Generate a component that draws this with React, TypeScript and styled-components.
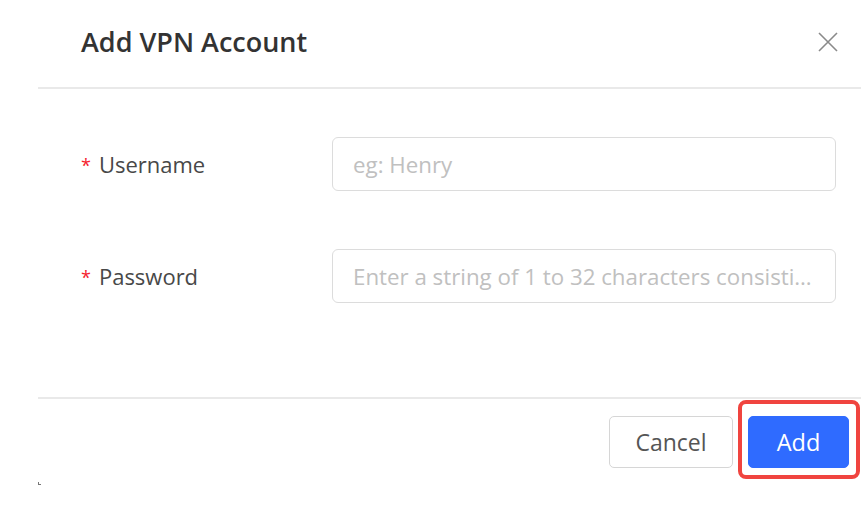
import React from "react";
import styled, { createGlobalStyle } from "styled-components";

const Global = createGlobalStyle`
  html, body { margin: 0; padding: 0; background: #ffffff; }
  body { font-family: "Open Sans", "Noto Sans", sans-serif; }
  * { box-sizing: border-box; }
`;

const Page = styled.div`
  width: 861px;
  height: 509px;
  padding-left: 38px;
  background: #fff;
  position: relative;
  overflow: hidden;
`;

const Dialog = styled.div`
  display: flex;
  flex-direction: column;
  width: 100%;
`;

const Header = styled.div`
  height: 89px;
  display: flex;
  align-items: center;
  justify-content: space-between;
  padding: 0 22px 4px 43px;
  border-bottom: 2px solid #e9e9e9;
`;

const Title = styled.h2`
  margin: 0;
  font-size: 27px;
  font-weight: 600;
  color: #333;
  letter-spacing: 0;
`;

const Close = styled.button`
  border: none;
  background: none;
  padding: 0;
  width: 22px;
  height: 22px;
  display: flex;
  align-items: center;
  justify-content: center;
  cursor: pointer;
`;

const Body = styled.div`
  height: 308px;
  padding: 48px 25px 0 43px;
  display: grid;
  grid-template-columns: 251px 1fr;
  grid-auto-rows: 54px;
  row-gap: 58px;
  align-items: center;
`;

const Label = styled.label`
  font-size: 22px;
  color: #484848;
  display: flex;
  align-items: center;
`;

const Star = styled.span`
  color: #f5222d;
  font-size: 18px;
  margin-right: 8px;
  position: relative;
  top: 1px;
`;

const Input = styled.input`
  width: 100%;
  height: 54px;
  border: 1.5px solid #dcdcdc;
  border-radius: 6px;
  padding: 0 20px;
  font-family: "Open Sans", "Noto Sans", sans-serif;
  font-size: 22.3px;
  color: #333;
  outline: none;
  text-overflow: ellipsis;
  &::placeholder { color: #c0c0c0; }
`;

const Footer = styled.div`
  border-top: 2px solid #e9e9e9;
  display: flex;
  justify-content: flex-end;
  gap: 15px;
  padding: 17px 12px 0 0;
`;

const Button = styled.button<{ $primary?: boolean }>`
  height: 52px;
  padding: 0;
  width: ${(p) => (p.$primary ? "101px" : "124px")};
  border-radius: 5px;
  border: 1.5px solid ${(p) => (p.$primary ? "#2f6bff" : "#d6d6d6")};
  background: ${(p) => (p.$primary ? "#2f6bff" : "#fff")};
  color: ${(p) => (p.$primary ? "#fff" : "#555")};
  font-family: "Open Sans", "Noto Sans", sans-serif;
  font-size: ${(p) => (p.$primary ? "23.5px" : "23px")};
  font-weight: ${(p) => (p.$primary ? 500 : 400)};
  cursor: pointer;
`;

const Highlight = styled.div`
  position: relative;
  display: flex;
  &::after {
    content: "";
    position: absolute;
    left: -10px;
    right: -11px;
    top: -16px;
    bottom: -11px;
    border: 4px solid #f0443f;
    border-radius: 8px;
    pointer-events: none;
  }
`;

const Corner = styled.div`
  position: absolute;
  left: 38px;
  top: 482px;
  width: 3px;
  height: 3px;
  border-left: 1px solid #777;
  border-bottom: 1px solid #777;
`;

export default function App() {
  return (
    <>
      <Global />
      <Page>
        <Dialog>
          <Header>
            <Title>Add VPN Account</Title>
            <Close aria-label="close">
              <svg width="20" height="20" viewBox="0 0 20 20">
                <path d="M1 1 L19 19 M19 1 L1 19" stroke="#8a8a8a" strokeWidth="1.6" fill="none" />
              </svg>
            </Close>
          </Header>
          <Body>
            <Label>
              <Star>*</Star>Username
            </Label>
            <Input placeholder="eg: Henry" />
            <Label>
              <Star>*</Star>Password
            </Label>
            <Input placeholder="Enter a string of 1 to 32 characters consisting of letters, digits and symbols" />
          </Body>
          <Footer>
            <Button>Cancel</Button>
            <Highlight>
              <Button $primary>Add</Button>
            </Highlight>
          </Footer>
        </Dialog>
        <Corner />
      </Page>
    </>
  );
}
